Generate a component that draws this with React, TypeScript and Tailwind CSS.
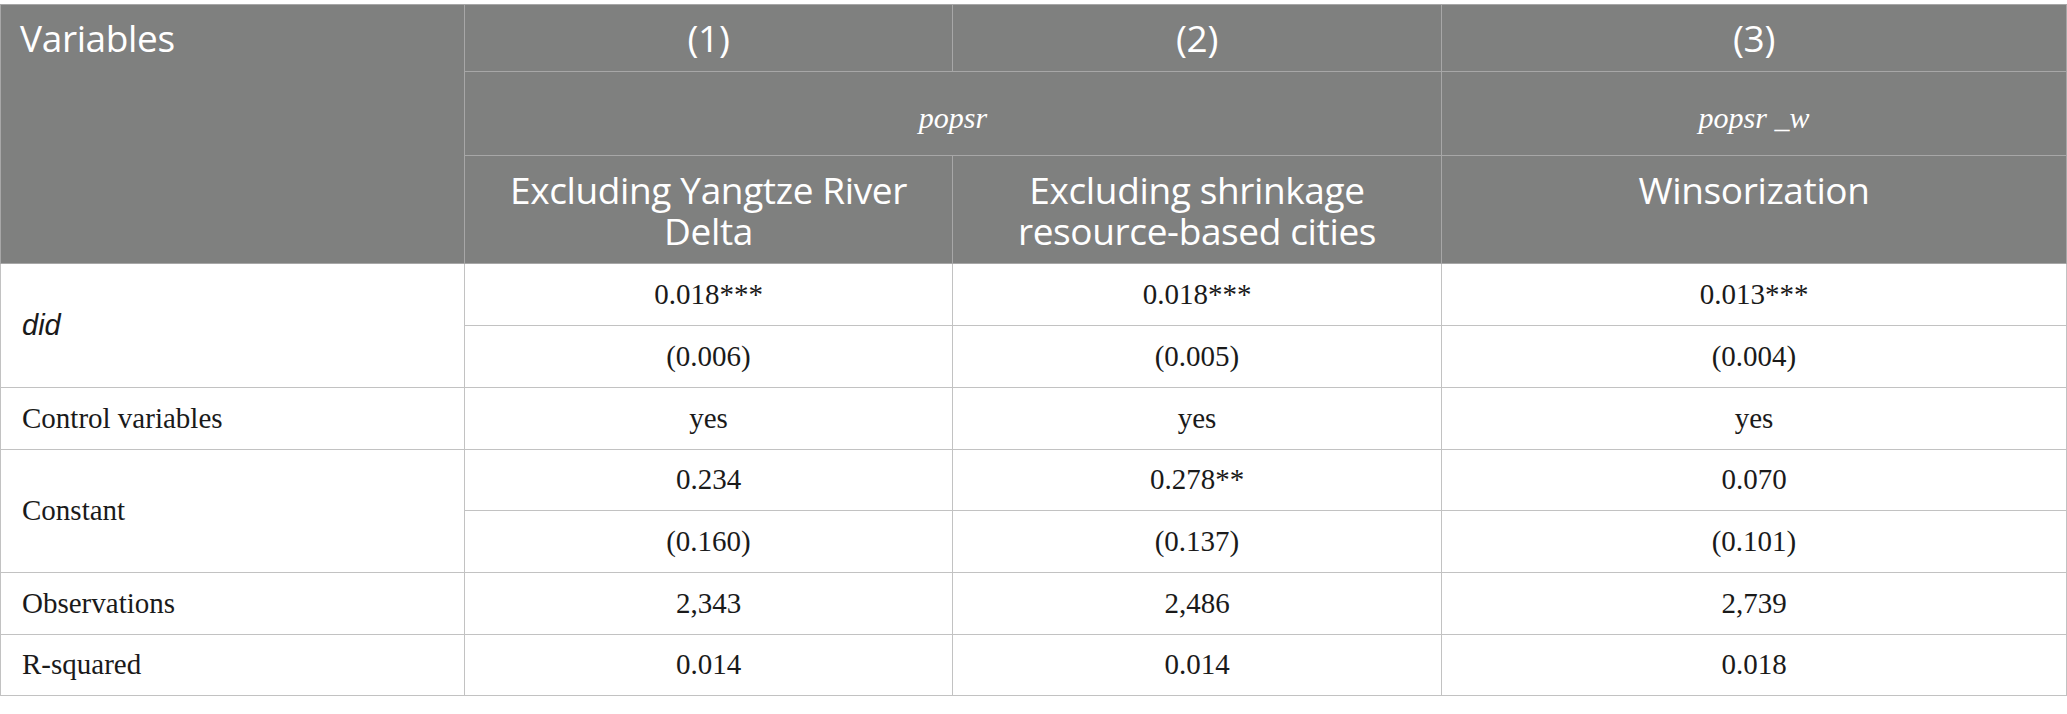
export default function App() {
  const head = 'border-[1.5px] border-[#a7a7a7] bg-[#7f807f] text-white font-normal'
  const cell = 'border-[1.5px] border-[#c2c2c2] text-center align-middle'
  const label = 'border-[1.5px] border-[#c2c2c2] text-left align-middle pl-[21px]'

  const rows = [
    { name: 'Control variables', values: ['yes', 'yes', 'yes'] },
  ]

  return (
    <div className="bg-white w-[2067px] h-[714px] pt-[4px]">
      <table className="border-collapse w-[2066px] table-fixed font-['Liberation_Serif',serif] text-[29px] text-[#1a1a1a]">
        <colgroup>
          <col className="w-[464px]" />
          <col className="w-[488px]" />
          <col className="w-[489px]" />
          <col className="w-[625px]" />
        </colgroup>
        <thead className="font-['Open_Sans',sans-serif] text-[37px] tracking-[-0.01em]">
          <tr className="h-[67px]">
            <th rowSpan={3} className={`${head} text-left align-top pl-[19px] pt-[12px] leading-[42px]`}>
              Variables
            </th>
            <th className={`${head} text-center align-middle`}>(1)</th>
            <th className={`${head} text-center align-middle`}>(2)</th>
            <th className={`${head} text-center align-middle`}>(3)</th>
          </tr>
          <tr className="h-[84px]">
            <th colSpan={2} className={`${head} text-center align-middle font-['Liberation_Serif',serif] italic text-[30px] tracking-normal pt-[8px]`}>
              popsr
            </th>
            <th className={`${head} text-center align-middle font-['Liberation_Serif',serif] italic text-[30px] tracking-normal pt-[8px]`}>
              popsr _w
            </th>
          </tr>
          <tr className="h-[108px]">
            <th className={`${head} text-center align-top pt-[13px] px-5 leading-[41px]`}>
              Excluding Yangtze River Delta
            </th>
            <th className={`${head} text-center align-top pt-[13px] px-5 leading-[41px]`}>
              Excluding shrinkage resource-based cities
            </th>
            <th className={`${head} text-center align-top pt-[13px] px-5 leading-[41px]`}>
              Winsorization
            </th>
          </tr>
        </thead>
        <tbody>
          <tr className="h-[62px]">
            <td rowSpan={2} className={`${label} font-['Liberation_Sans',sans-serif] italic text-[29px]`}>
              did
            </td>
            <td className={cell}>0.018***</td>
            <td className={cell}>0.018***</td>
            <td className={cell}>0.013***</td>
          </tr>
          <tr className="h-[62px]">
            <td className={cell}>(0.006)</td>
            <td className={cell}>(0.005)</td>
            <td className={cell}>(0.004)</td>
          </tr>
          {rows.map((r) => (
            <tr key={r.name} className="h-[62px]">
              <td className={label}>{r.name}</td>
              {r.values.map((v, i) => (
                <td key={i} className={cell}>{v}</td>
              ))}
            </tr>
          ))}
          <tr className="h-[61px]">
            <td rowSpan={2} className={label}>Constant</td>
            <td className={cell}>0.234</td>
            <td className={cell}>0.278**</td>
            <td className={cell}>0.070</td>
          </tr>
          <tr className="h-[62px]">
            <td className={cell}>(0.160)</td>
            <td className={cell}>(0.137)</td>
            <td className={cell}>(0.101)</td>
          </tr>
          <tr className="h-[62px]">
            <td className={label}>Observations</td>
            <td className={cell}>2,343</td>
            <td className={cell}>2,486</td>
            <td className={cell}>2,739</td>
          </tr>
          <tr className="h-[61px]">
            <td className={label}>R-squared</td>
            <td className={cell}>0.014</td>
            <td className={cell}>0.014</td>
            <td className={cell}>0.018</td>
          </tr>
        </tbody>
      </table>
    </div>
  )
}
